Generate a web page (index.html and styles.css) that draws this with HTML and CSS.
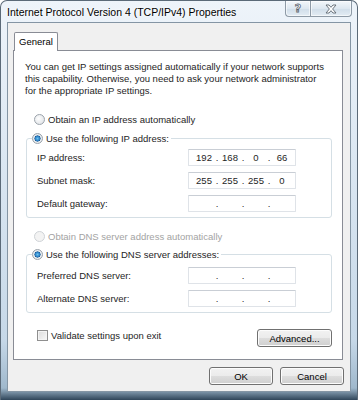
FILE: index.html
```html
<!DOCTYPE html>
<html lang="en">
<head>
    <meta charset="UTF-8">
    <title>Internet Protocol Version 4 (TCP/IPv4) Properties</title>
    <link rel="stylesheet" href="styles.css">
</head>
<body>
    <div class="window">
        <div class="titlebar">
            <span class="title">Internet Protocol Version 4 (TCP/IPv4) Properties</span>
            <div class="caption-buttons">
                <div class="cap-btn help">?</div>
                <div class="cap-btn close">
                    <svg width="12" height="10" viewBox="0 0 12 10">
                        <path d="M1 1h3l2 2.3L8 1h3L7.6 5 11 9H8L6 6.7 4 9H1l3.4-4z" fill="#fff" stroke="#5d6670" stroke-width="0.9" stroke-linejoin="round"/>
                    </svg>
                </div>
            </div>
        </div>

        <div class="client">
            <div class="tabs">
                <div class="tab">General</div>
            </div>

            <div class="panel">
                <p class="intro">
                    You can get IP settings assigned automatically if your network supports<br>
                    this capability. Otherwise, you need to ask your network administrator<br>
                    for the appropriate IP settings.
                </p>

                <div class="option first-option">
                    <span class="radio"></span>Obtain an IP address automatically
                </div>

                <fieldset class="group ip-group">
                    <legend><span class="radio checked"></span>Use the following IP address:</legend>
                    <div class="field-row">
                        <span class="field-label">IP address:</span>
                        <div class="ip-input">
                            <span class="octet">192</span><span class="dot">.</span>
                            <span class="octet">168</span><span class="dot">.</span>
                            <span class="octet">0</span><span class="dot">.</span>
                            <span class="octet">66</span>
                        </div>
                    </div>
                    <div class="field-row">
                        <span class="field-label">Subnet mask:</span>
                        <div class="ip-input">
                            <span class="octet">255</span><span class="dot">.</span>
                            <span class="octet">255</span><span class="dot">.</span>
                            <span class="octet">255</span><span class="dot">.</span>
                            <span class="octet">0</span>
                        </div>
                    </div>
                    <div class="field-row">
                        <span class="field-label">Default gateway:</span>
                        <div class="ip-input">
                            <span class="octet"></span><span class="dot">.</span>
                            <span class="octet"></span><span class="dot">.</span>
                            <span class="octet"></span><span class="dot">.</span>
                            <span class="octet"></span>
                        </div>
                    </div>
                </fieldset>

                <div class="option dns-option disabled">
                    <span class="radio"></span>Obtain DNS server address automatically
                </div>

                <fieldset class="group dns-group">
                    <legend><span class="radio checked"></span>Use the following DNS server addresses:</legend>
                    <div class="field-row">
                        <span class="field-label">Preferred DNS server:</span>
                        <div class="ip-input">
                            <span class="octet"></span><span class="dot">.</span>
                            <span class="octet"></span><span class="dot">.</span>
                            <span class="octet"></span><span class="dot">.</span>
                            <span class="octet"></span>
                        </div>
                    </div>
                    <div class="field-row">
                        <span class="field-label">Alternate DNS server:</span>
                        <div class="ip-input">
                            <span class="octet"></span><span class="dot">.</span>
                            <span class="octet"></span><span class="dot">.</span>
                            <span class="octet"></span><span class="dot">.</span>
                            <span class="octet"></span>
                        </div>
                    </div>
                </fieldset>

                <div class="panel-footer">
                    <div class="check-row">
                        <span class="checkbox"></span>Validate settings upon exit
                    </div>
                    <button class="btn advanced-btn">Advanced...</button>
                </div>
            </div>

            <div class="dialog-buttons">
                <button class="btn">OK</button>
                <button class="btn">Cancel</button>
            </div>
        </div>
    </div>
</body>
</html>
```

FILE: styles.css
```css
:root {
    --client-bg: #f0f0f0;
    --panel-border: #898c95;
    --group-border: #d5dfe5;
    --text: #1e1e1e;
    --disabled: #a3a3a3;
    --ui-font: 'Liberation Sans', Arial, sans-serif;
}

* {
    margin: 0;
    padding: 0;
    box-sizing: border-box;
}

body {
    background: #ffffff;
    font-family: var(--ui-font);
    font-size: 9.5px;
    color: var(--text);
}

/* window frame */
.window {
    width: 358px;
    height: 400px;
    display: flex;
    flex-direction: column;
    padding: 0 6px 8px 6px;
    border: 1px solid #5b6a78;
    border-bottom: none;
    border-radius: 7px 7px 0 0;
    background: linear-gradient(to bottom, #eef4fa 0%, #dbe7f2 40%, #c6d8e8 85%, #9fb8cc 97%, #2f4559 100%);
}

.titlebar {
    height: 21px;
    display: flex;
    align-items: flex-start;
    justify-content: space-between;
}

.title {
    font-size: 10.5px;
    line-height: 22px;
    color: #000;
    text-shadow: 0 0 6px #ffffff, 0 0 3px #ffffff;
}

.caption-buttons {
    display: flex;
    margin-right: -1px;
}

.cap-btn {
    height: 16px;
    display: flex;
    align-items: center;
    justify-content: center;
    border: 1px solid #8e9aa6;
    border-top: none;
    background: linear-gradient(to bottom, #f3f7fb, #dde7f0 50%, #d0dde9 51%, #e3ecf4);
    box-shadow: inset 0 0 0 1px rgba(255, 255, 255, 0.6);
}

.cap-btn.help {
    width: 25px;
    border-right: none;
    border-bottom-left-radius: 4px;
    font-family: 'DejaVu Sans', sans-serif;
    font-size: 11px;
    font-weight: 700;
    color: #fff;
    -webkit-text-stroke: 0.8px #5d6670;
}

.cap-btn.close {
    width: 42px;
    border-bottom-right-radius: 4px;
}

/* client area */
.client {
    flex: 1;
    display: flex;
    flex-direction: column;
    background: var(--client-bg);
    border: 1px solid #8495a4;
    padding: 9px 6px 6px 5px;
}

.tabs {
    display: flex;
    padding-left: 1px;
}

.tab {
    width: 44px;
    height: 19px;
    margin-bottom: -1px;
    position: relative;
    z-index: 1;
    background: #fff;
    border: 1px solid var(--panel-border);
    border-bottom: none;
    border-radius: 2px 2px 0 0;
    text-align: center;
    line-height: 18px;
    color: #000;
}

.panel {
    flex: 1;
    display: flex;
    flex-direction: column;
    background: #fff;
    border: 1px solid var(--panel-border);
    margin-right: 1px;
    padding: 10px 10px 0 11px;
}

.intro {
    line-height: 12px;
}

.option {
    height: 14px;
    display: flex;
    align-items: center;
}

.first-option {
    margin-top: 15px;
}

.dns-option {
    margin-top: 11px;
}

.disabled {
    color: var(--disabled);
}

.radio {
    width: 11px;
    height: 11px;
    margin: 0 3px 0 9px;
    border-radius: 50%;
    border: 1px solid #9ba3ab;
    background: radial-gradient(circle at 40% 40%, #ffffff 0%, #e4e7ea 70%, #cfd3d7 100%);
    flex-shrink: 0;
}

.radio.checked {
    background: radial-gradient(circle, #6bc4f0 0%, #2b7fc4 35%, #1b5a94 45%, #eef2f5 52%, #d4d9de 100%);
}

.disabled .radio {
    border-color: #cfd3d7;
    background: #f3f3f3;
}

/* group boxes */
.group {
    margin-left: 1px;
    border: 1px solid var(--group-border);
    border-radius: 3px;
    padding: 1px 0 2px 10px;
}

.ip-group {
    margin-top: 5px;
}

.dns-group {
    margin-top: 4px;
    padding-top: 3px;
}

.group legend {
    height: 14px;
    display: flex;
    align-items: center;
    margin-left: -5px;
    padding-right: 2px;
}

.group legend .radio {
    margin-left: 0;
    margin-right: 3px;
}

.field-row {
    height: 23px;
    display: flex;
    align-items: center;
}

.field-label {
    width: 151px;
}

.ip-input {
    width: 108px;
    height: 17px;
    display: flex;
    align-items: center;
    padding-left: 4px;
    border: 1px solid #dfe3e8;
    border-top-color: #c9ced5;
    border-radius: 1px;
    background: #fff;
}

.octet {
    width: 22px;
    text-align: center;
}

.dot {
    width: 4px;
    text-align: center;
}

.panel-footer {
    margin-top: 16px;
    display: flex;
    align-items: flex-start;
    justify-content: space-between;
}

.check-row {
    display: flex;
    align-items: center;
    height: 12px;
    margin-top: 0;
}

.checkbox {
    width: 11px;
    height: 11px;
    margin: 0 3px 0 12px;
    border: 1px solid #8f8f8f;
    background: linear-gradient(135deg, #dcdcdc, #f8f8f8);
    box-shadow: inset 0 0 0 1px #f4f4f4;
}

/* buttons */
.btn {
    height: 18px;
    font-family: var(--ui-font);
    font-size: 9.5px;
    color: #000;
    border: 1px solid #707070;
    border-radius: 3px;
    background: linear-gradient(to bottom, #f2f2f2 0%, #ebebeb 50%, #dddddd 51%, #cfcfcf 100%);
    box-shadow: inset 0 0 0 1px #fcfcfc;
}

.advanced-btn {
    width: 75px;
}

.dialog-buttons {
    margin-top: 7px;
    display: flex;
    justify-content: flex-end;
    gap: 7px;
}

.dialog-buttons .btn {
    width: 64px;
}
```
